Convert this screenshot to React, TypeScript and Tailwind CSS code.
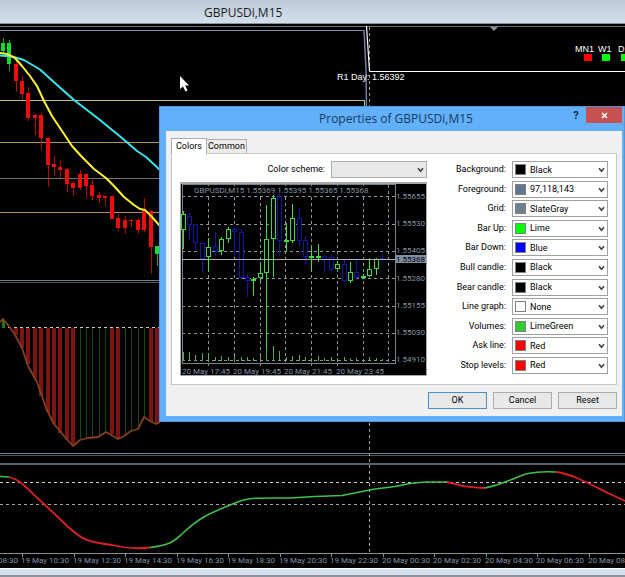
import React from "react";

type Candle = [x: number, high: number, top: number, bottom: number, low: number, up?: 1];

const candles: Candle[] = [
  [3, 38, 43, 51, 53, 1], [9, 40, 43, 64, 71, 1], [16, 61, 64, 81, 92], [22, 76, 81, 94, 100],
  [28, 87, 93, 118, 121], [35, 114, 115, 118, 135], [41, 113, 115, 138, 150], [48, 137, 138, 165, 187],
  [54, 156, 164, 167, 176], [60, 160, 167, 170, 178], [67, 168, 169, 184, 192], [73, 181, 183, 188, 196],
  [80, 170, 174, 188, 190], [86, 173, 174, 186, 198], [92, 180, 185, 196, 200], [99, 192, 195, 198, 203],
  [105, 196, 196, 198, 206], [112, 196, 196, 219, 219], [118, 214, 218, 228, 231], [125, 216, 220, 228, 234],
  [131, 219, 220, 221, 227], [138, 218, 220, 230, 234], [144, 198, 210, 230, 232], [151, 210, 211, 247, 274],
  [157, 246, 246, 254, 266, 1],
];

const previewCandles: Candle[] = [
  [184, 211, 214, 230, 249, 1], [190, 213, 216, 225, 240], [196, 224, 224, 243, 250], [203, 243, 243, 259, 272],
  [209, 238, 247, 257, 272, 1], [216, 232, 246, 251, 256], [222, 237, 239, 251, 255, 1], [229, 227, 229, 239, 243, 1],
  [235, 227, 229, 232, 256], [242, 229, 232, 278, 279], [248, 274, 277, 281, 297], [254, 277, 279, 281, 296, 1],
  [261, 262, 273, 278, 282, 1], [267, 205, 239, 273, 361, 1], [274, 195, 198, 239, 277, 1], [280, 194, 196, 241, 256],
  [287, 223, 240, 241, 252, 1], [293, 204, 218, 241, 243, 1], [300, 208, 218, 241, 246], [306, 237, 240, 257, 265],
  [312, 247, 256, 257, 272, 1], [319, 244, 256, 257, 262, 1], [325, 255, 256, 260, 272], [332, 254, 257, 270, 271],
  [338, 261, 264, 269, 271, 1], [345, 259, 264, 281, 282], [351, 262, 272, 281, 283, 1], [357, 260, 272, 278, 280],
  [364, 274, 276, 278, 279, 1], [370, 258, 269, 276, 277, 1], [377, 258, 259, 269, 275, 1], [383, 254, 258, 260, 261],
];

const volumes = [9, 9, 6, 8, 7, 4, 5, 4, 5, 4, 4, 3, 5, 12, 15, 10, 4, 5, 6, 4, 3, 5, 3, 4, 3, 4, 3, 3, 2, 4, 3, 2];

const histogram: [x: number, bottom: number, wide: boolean][] = [
  [16, 335, true], [22, 348, true], [28, 364, true], [35, 378, true], [41, 396, true], [48, 412, true], [54, 424, true],
  [60, 433, true], [67, 439, true], [73, 444, true], [80, 439, false], [86, 438, false], [92, 437, false],
  [99, 436, false], [105, 432, false], [112, 434, true], [118, 438, true], [125, 435, false], [131, 431, false],
  [138, 428, false], [144, 417, false], [151, 421, true], [157, 423, true],
];

const times = [
  "19 May 08:30", "19 May 10:30", "19 May 12:30", "19 May 14:30", "19 May 16:30", "19 May 18:30", "19 May 20:30",
  "19 May 22:30", "20 May 00:30", "20 May 02:30", "20 May 04:30", "20 May 06:30", "20 May 08:30",
];

const prices = ["1.55655", "1.55530", "1.55405", "1.55280", "1.55155", "1.55030", "1.54910"];

const colorFields = [
  { id: "background", label: "Background:", value: "Black", swatch: "#000000" },
  { id: "foreground", label: "Foreground:", value: "97,118,143", swatch: "#61768f" },
  { id: "grid", label: "Grid:", value: "SlateGray", swatch: "#708090" },
  { id: "bar-up", label: "Bar Up:", value: "Lime", swatch: "#00ff00" },
  { id: "bar-down", label: "Bar Down:", value: "Blue", swatch: "#0000ff" },
  { id: "bull", label: "Bull candle:", value: "Black", swatch: "#000000" },
  { id: "bear", label: "Bear candle:", value: "Black", swatch: "#000000" },
  { id: "line", label: "Line graph:", value: "None", swatch: "#ffffff" },
  { id: "volumes", label: "Volumes:", value: "LimeGreen", swatch: "#32cd32" },
  { id: "ask", label: "Ask line:", value: "Red", swatch: "#ff0000" },
  { id: "stop", label: "Stop levels:", value: "Red", swatch: "#ff0000" },
];

function Chevron() {
  return (
    <svg className="pointer-events-none absolute top-[6px] right-[3px] h-[6px] w-[7px]" viewBox="0 0 7 6" fill="none">
      <path d="M1 1.2 3.5 4.2 6 1.2" stroke="#404040" strokeWidth="1.6" />
    </svg>
  );
}

function MainChart() {
  return (
    <svg className="block h-[545px] w-full font-[Roboto,sans-serif] text-[8px]">
      <g transform="translate(0 -23)">
        <g shapeRendering="crispEdges" fill="none">
          <rect y="23" width="100%" height="1" fill="#8a9198" />
          <rect y="26" width="100%" height="1" fill="#68747e" />
          <path d="M0 30.5H364" stroke="#7c86b0" />
          <path d="M0 100.5H364V110" stroke="#c3bf74" />
          <path d="M0 142.5H160" stroke="#b09a45" />
          <path d="M0 178.5H160" stroke="#6e747c" />
          <path d="M0 212.5H160" stroke="#b58a48" />
          <rect y="280" width="100%" height="1" fill="#75818c" />
          <rect y="282" width="100%" height="1" fill="#4d5963" />
          <rect y="453" width="100%" height="1" fill="#75818c" />
          <rect y="455" width="100%" height="1" fill="#4d5963" />
          <rect y="463" width="100%" height="2" fill="#56616b" />
          <rect y="553" width="100%" height="1" fill="#87919a" />
          <path d="M369.5 27V553" stroke="#a0a0a0" strokeDasharray="3 3" />
          <path d="M370 71.5H4000" stroke="#ffffff" />
          <path d="M2 327.5H160" stroke="#c8c8c8" strokeDasharray="3 3" />
          <path d="M0 482.5H4000" stroke="#d0d0d0" strokeDasharray="3 3" />
          <path d="M0 504.5H4000" stroke="#a4a4a4" strokeDasharray="3 3" />
          {histogram.map(([x, bottom, wide]) => (
            <rect key={x} x={wide ? x - 2 : x} y="328" width={wide ? 4 : 1} height={bottom - 328} fill={wide ? "#7c1414" : "#164a16"} />
          ))}
          <rect x="2" y="320" width="3" height="8" fill="#108010" />
          {candles.map(([x, high, top, bottom, low, up]) => (
            <g key={x} fill={up ? "#14dc28" : "#ee0c0c"}>
              <rect x={x} y={high} width="1" height={low - high} opacity="0.75" />
              <rect x={x - 2} y={top} width="4" height={Math.max(1, bottom - top)} />
            </g>
          ))}
          {times.map((t, i) => (
            <rect key={t} x={Math.round(22 + (i - 1) * 51.5)} y="554" width="1" height="3" fill="#87919a" />
          ))}
        </g>
        <g fill="none" strokeLinejoin="round">
          <path d="M364 30 366 70 366.500 110" stroke="#6f7fa8" strokeWidth="1.5" />
          <path d="M366.500 26 369.500 71" stroke="#ffffff" strokeWidth="1.2" />
          <path d="M0 55.500 12 56.500 24 60 40 69.500 56 84 74 100 100 120 122 138 137 151 146 157 160 170" stroke="#35e6ee" strokeWidth="2" />
          <path d="M0 53 7 54 15 58 22 66 30 76 37 86 44 101 52 116 62 131 72 146 82 157 94 169 106 178 114 186 124 197 134 205 140 209 145 210 152 217 160 226" stroke="#fff22e" strokeWidth="2" />
          <path d="M0 322 3 319 8 325 14 333 22 348 28 366 37 382 46 408 54 424 64 436 73 446 80 440 88 438 98 437 106 432 118 439 124 436 131 431 138 429 144 417 150 421 156 424 160 422" stroke="#85401c" strokeWidth="1.8" />
          <path d="M0 476.500 9 477M150 547.500C172 545 175 540 183 533 198 519 205 515 235 503 249 497 255 498 290 498L315 496.500 342 495.500 375 489 395 486.500 410 483.500 425 482 447 482M485 488C505 484 515 477 528 473.500 540 471 548 471.500 556 472" stroke="#3fc04a" strokeWidth="1.6" />
          <path d="M9 477C22 481 22 484 45 505L62 521C82 541 88 542 112 545 128 549 138 549 150 547.500M447 482C460 485 463 488 485 488M556 472C572 474 590 484 608 493L625 501" stroke="#dc1f26" strokeWidth="1.8" />
        </g>
        <path d="M490 27H498L494 31Z" fill="#8a9299" />
        <path d="M180 76V89L183 86.500 185.500 91.500 187.500 90.500 185.200 85.500H189Z" fill="#fff" />
        <g fill="#fff" className="font-['Liberation_Sans',sans-serif] text-[9px]">
          <text x="337" y="80">R1 Day: 1.56392</text>
          <text x="575" y="52">MN1</text>
          <text x="598" y="52">W1</text>
          <text x="618" y="52">D1</text>
        </g>
        <rect x="584" y="54" width="8" height="7" fill="#f00" />
        <rect x="602" y="54" width="8" height="7" fill="#0f0" />
        <rect x="621" y="54" width="8" height="7" fill="#0f0" />
        <g fill="#8494a3">
          {times.map((t, i) => (
            <text key={t} x={Math.round(21 + (i - 1) * 51.5)} y="563">{t}</text>
          ))}
        </g>
      </g>
    </svg>
  );
}

function Preview() {
  return (
    <svg className="block h-[191px] w-full bg-black font-[Roboto,sans-serif] text-[8px]">
      <g transform="translate(-182 -184)">
        <g shapeRendering="crispEdges" fill="none">
          <path d="M209.5 185V363M235.500 185V363M261.500 185V363M286.500 185V363M312.500 185V363M338.500 185V363M364.500 185V363M389.500 185V363" stroke="#8d969c" strokeDasharray="3 3" />
          <path d="M183 196.500H396M183 224.500H396M183 251.500H396M183 278.500H396M183 306.500H396M183 333.500H396M183 360.500H396" stroke="#8d969c" strokeDasharray="3 3" />
          <path d="M183.500 184.500H396.500V363.500H183.500Z" stroke="#78838c" />
          <path d="M209.500 363V366M261.500 363V366M312.500 363V366M338.500 363V366" stroke="#78838c" />
          {previewCandles.map(([x, high, top, bottom, low, up], i) => (
            <g key={x} stroke={up ? "#3fdc3f" : "#1414a8"}>
              <path d={`M${x + 0.5} ${high}V${low}`} />
              <rect x={x - 1.5} y={top + 0.5} width="4" height={Math.max(1, bottom - top - 1)} fill={bottom - top > 1 ? "#000" : "none"} />
              <path d={`M${x + 0.5} 361V${361 - volumes[i]}`} stroke="#4fae4f" />
            </g>
          ))}
          <path d="M183 259.500H396" stroke="#aab0b5" />
        </g>
        <rect x="194" y="186" width="176" height="8" fill="#000" />
        <g fill="#8494a3">
          <text x="195" y="193">GBPUSDi,M15 1.55369 1.55395 1.55365 1.55368</text>
          {prices.map((p, i) => (
            <text key={p} x="426" y={199 + Math.round(i * 27.2)} textAnchor="end">{p}</text>
          ))}
          <text x="183" y="374">20 May 17:45</text>
          <text x="234" y="374">20 May 19:45</text>
          <text x="285" y="374">20 May 21:45</text>
          <text x="337" y="374">20 May 23:45</text>
        </g>
        <rect x="396" y="255" width="31" height="8" fill="#7d8fa3" />
        <text x="426" y="262" textAnchor="end" fill="#000">1.55368</text>
      </g>
    </svg>
  );
}

function PropertiesDialog() {
  return (
    <div
      role="dialog"
      aria-label="Properties of GBPUSDi,M15"
      className="absolute top-[106px] left-[159px] w-[466px] border border-[#5295d8] bg-[#62b0fa] pr-[2px] pb-[5px] pl-[6px] font-[Roboto,sans-serif] text-[9px] leading-[11px] text-black"
    >
      <div className="flex h-6 items-start">
        <h2 className="flex-1 pl-[60px] text-center font-['Open_Sans',sans-serif] text-[12px] leading-[23px] text-[#173b60]">
          Properties of GBPUSDi,M15
        </h2>
        <button aria-label="Help" className="w-5 text-[11px] leading-[18px] font-bold text-[#0b2a4a]">?</button>
        <button aria-label="Close" className="flex h-4 w-9 items-center justify-center bg-[#c75050]">
          <svg className="h-[7px] w-[7px]" viewBox="0 0 7 7"><path d="M1 1 6 6M6 1 1 6" stroke="#fff" strokeWidth="1.6" /></svg>
        </button>
      </div>
      <div className="bg-[#f0f0f0] px-[5px] py-[7px]">
        <div role="tablist" className="flex items-end">
          <button role="tab" aria-selected="true" className="relative -mb-px h-4 border border-b-0 border-[#acacac] bg-white px-1">Colors</button>
          <button role="tab" aria-selected="false" className="h-[14px] border border-b-0 border-l-0 border-[#acacac] bg-[#ececec] px-px">Common</button>
        </div>
        <div className="flex justify-between border border-[#c8c8c8] bg-white pt-[7px] pr-2 pb-2 pl-2">
          <div className="w-[247px]">
            <div className="flex items-center justify-end gap-[6px]">
              <label htmlFor="scheme">Color scheme:</label>
              <div className="relative w-24">
                <select id="scheme" className="block h-[17px] w-full appearance-none border border-[#acacac] bg-[#e8e8e8]"><option></option></select>
                <Chevron />
              </div>
            </div>
            <div className="mt-1 border border-t-2 border-[#a4a8ac]"><Preview /></div>
          </div>
          <div className="flex h-[213px] flex-col justify-between">
            {colorFields.map((f) => (
              <div key={f.id} className="flex items-center justify-end gap-[6px]">
                <label htmlFor={f.id}>{f.label}</label>
                <div className="relative w-24">
                  <select id={f.id} className="block h-[17px] w-full appearance-none border border-[#a0a0a0] bg-white pt-px pl-[17px]">
                    <option>{f.value}</option>
                  </select>
                  <span className="pointer-events-none absolute top-[3px] left-[3px] h-[11px] w-[11px] border border-[#808080]" style={{ backgroundColor: f.swatch }} />
                  <Chevron />
                </div>
              </div>
            ))}
          </div>
        </div>
        <div className="mt-[7px] flex justify-end gap-[6px]">
          <button className="h-[17px] w-[59px] border border-[#4a90d0] bg-[#e8e8e8]">OK</button>
          <button className="h-[17px] w-[59px] border border-[#acacac] bg-[#e8e8e8]">Cancel</button>
          <button className="h-[17px] w-[59px] border border-[#acacac] bg-[#e8e8e8]">Reset</button>
        </div>
      </div>
    </div>
  );
}

export default function App() {
  return (
    <main className="relative overflow-hidden bg-black">
      <header className="h-[23px] bg-linear-to-b from-[#bdc9d6] to-[#d3dfeb] pl-[204px]">
        <h1 className="font-['Open_Sans',sans-serif] text-[12px] leading-[26px] text-[#1c1c1c]">GBPUSDi,M15</h1>
      </header>
      <MainChart />
      <footer className="h-[9px] border-t border-b-2 border-t-white border-b-[#8d949b] bg-[#d5e0ed]" />
      <PropertiesDialog />
    </main>
  );
}
